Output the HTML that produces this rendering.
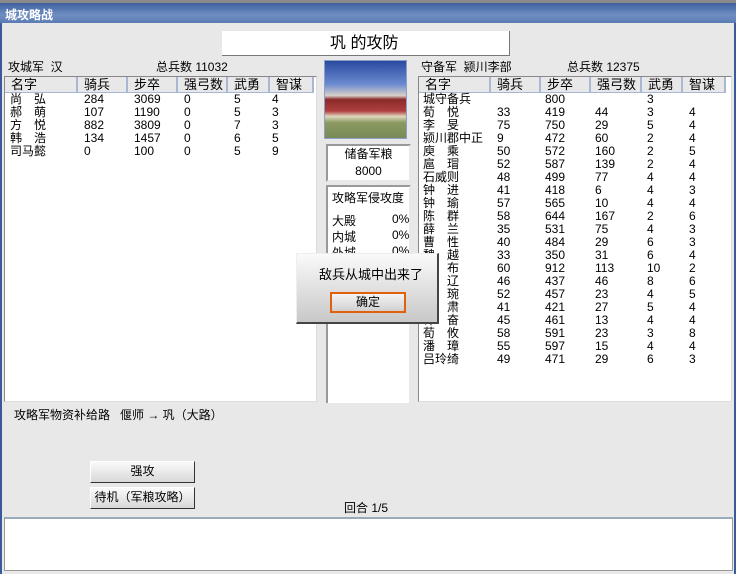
<!DOCTYPE html>
<html><head><meta charset="utf-8"><style>
*{margin:0;padding:0;box-sizing:border-box}
body{width:736px;height:574px;overflow:hidden;background:#e8e8e8;font-family:"Liberation Sans","WenQuanYi Zen Hei","Noto Sans CJK SC",sans-serif;font-size:12px;color:#000;position:relative}
.a{position:absolute;white-space:nowrap}
.tb{left:0;top:0;width:736px;height:23px;background:linear-gradient(#3e60a0,#6f8fc2 60%,#5a7ab4);border-top:3px solid #8a8a8a}
.tb span{position:absolute;left:5px;top:3px;color:#fff;font-weight:bold;font-size:12px}
.fr{position:absolute;top:23px;bottom:0;width:2px;background:#3a5aa0}
.box{position:absolute;background:#fff;border:1px solid #888;border-right-color:#ddd;border-bottom-color:#ddd}
.hd{position:absolute;top:0;height:16px;background:#e8e8e8;border-right:2px solid #a8b8d0;border-bottom:1px solid #a8b8d0;padding-left:6px;line-height:16px;font-size:13px}
.row{position:absolute;height:13px;line-height:13px}
.row span{position:absolute}
.btn{position:absolute;background:linear-gradient(#fafafa,#d8d8d8);border:1px solid #fff;border-right-color:#333;border-bottom-color:#333;text-align:center;line-height:19px}
</style></head><body>
<div class="a tb"><span>城攻略战</span></div>
<div class="fr" style="left:0"></div><div class="fr" style="right:0"></div>
<div class="a" style="left:222px;top:31px;width:288px;height:25px;background:#fff;border-right:1px solid #777;border-bottom:1px solid #777;font-size:16px;line-height:25px;padding-left:108px">巩 的攻防</div>
<div class="a" style="left:8px;top:58px">攻城军 &nbsp;汉</div>
<div class="a" style="left:156px;top:58px">总兵数 11032</div>
<div class="a" style="left:421px;top:58px">守备军 &nbsp;颍川李部</div>
<div class="a" style="left:567px;top:58px">总兵数 12375</div>

<div class="box" style="left:4px;top:76px;width:313px;height:326px">
<div class="hd" style="left:0;width:73px">名字</div><div class="hd" style="left:73px;width:50px">骑兵</div><div class="hd" style="left:123px;width:50px">步卒</div><div class="hd" style="left:173px;width:50px">强弓数</div><div class="hd" style="left:223px;width:42px">武勇</div><div class="hd" style="left:265px;width:44px">智谋</div>
<div id="L"></div>
</div>
<div class="box" style="left:418px;top:76px;width:314px;height:326px">
<div class="hd" style="left:0;width:72px">名字</div><div class="hd" style="left:72px;width:50px">骑兵</div><div class="hd" style="left:122px;width:50px">步卒</div><div class="hd" style="left:172px;width:51px">强弓数</div><div class="hd" style="left:223px;width:41px">武勇</div><div class="hd" style="left:264px;width:43px">智谋</div>
<div id="R"></div>
</div>

<div class="a" style="left:324px;top:60px;width:83px;height:79px;border:1px solid #8aa0c8;background:linear-gradient(#2a4aa0 0%,#6a8ad0 30%,#d8d0c8 45%,#8a2a2a 50%,#b04040 65%,#e0d8c0 72%,#8a9a60 80%,#7a8a58 100%)"></div>
<div class="a" style="left:326px;top:144px;width:85px;height:38px;background:#fff;border:2px solid #999;border-right-color:#e8e8e8;border-bottom-color:#e8e8e8;text-align:center;font-size:12px;line-height:17px">储备军粮<br>8000</div>
<div class="a" style="left:326px;top:185px;width:85px;height:218px;background:#fff;border:2px solid #999;border-right-color:#e8e8e8;border-bottom:0">
<div class="a" style="left:4px;top:2px">攻略军侵攻度</div>
<div class="a" style="left:4px;top:25px">大殿</div><div class="a" style="left:64px;top:25px">0%</div>
<div class="a" style="left:4px;top:41px">内城</div><div class="a" style="left:64px;top:41px">0%</div>
<div class="a" style="left:4px;top:57px">外城</div><div class="a" style="left:64px;top:57px">0%</div>
</div>

<div class="a" style="left:296px;top:253px;width:143px;height:71px;background:linear-gradient(#fafafa,#c8c8c8);border:1px solid #eee;border-right:2px solid #444;border-bottom:2px solid #444">
<div class="a" style="left:22px;top:10px;font-size:13px">敌兵从城中出来了</div>
<div class="a" style="left:33px;top:38px;width:76px;height:21px;border:2px solid #e06010;background:linear-gradient(#f4f4f4,#d0d0d0);text-align:center;line-height:17px">确定</div>
</div>

<div class="a" style="left:14px;top:406px">攻略军物资补给路 &nbsp;&nbsp;偃师 → 巩（大路）</div>
<div class="btn" style="left:90px;top:461px;width:105px;height:22px">强攻</div>
<div class="btn" style="left:90px;top:487px;width:105px;height:22px">待机（军粮攻略）</div>
<div class="a" style="left:344px;top:499px">回合 1/5</div>
<div class="a" style="left:4px;top:517px;width:729px;height:54px;background:#fff;border:1px solid #999;border-top:2px solid #9ab"></div>
<script>
var L=[["尚　弘",284,3069,0,5,4],["郝　萌",107,1190,0,5,3],["方　悦",882,3809,0,7,3],["韩　浩",134,1457,0,6,5],["司马懿",0,100,0,5,9]];
var R=[["城守备兵","",800,"",3,""],["荀　悦",33,419,44,3,4],["李　旻",75,750,29,5,4],["颍川郡中正",9,472,60,2,4],["庾　乘",50,572,160,2,5],["扈　瑁",52,587,139,2,4],["石威则",48,499,77,4,4],["钟　进",41,418,6,4,3],["钟　瑜",57,565,10,4,4],["陈　群",58,644,167,2,6],["薛　兰",35,531,75,4,3],["曹　性",40,484,29,6,3],["魏　越",33,350,31,6,4],["吕　布",60,912,113,10,2],["张　辽",46,437,46,8,6],["孙　琬",52,457,23,4,5],["陈　肃",41,421,27,5,4],["许　奋",45,461,13,4,4],["荀　攸",58,591,23,3,8],["潘　璋",55,597,15,4,4],["吕玲绮",49,471,29,6,3]];
function f(id,d,xs){var h="";d.forEach(function(r,i){h+='<div class="row" style="top:'+(16+i*13)+'px;left:0;width:300px">';r.forEach(function(c,j){h+='<span style="left:'+xs[j]+'px">'+c+'</span>'});h+='</div>'});document.getElementById(id).innerHTML=h;}
f("L",L,[5,79,129,179,229,267]);
f("R",R,[4,78,126,176,228,270]);
</script>
</body></html>
